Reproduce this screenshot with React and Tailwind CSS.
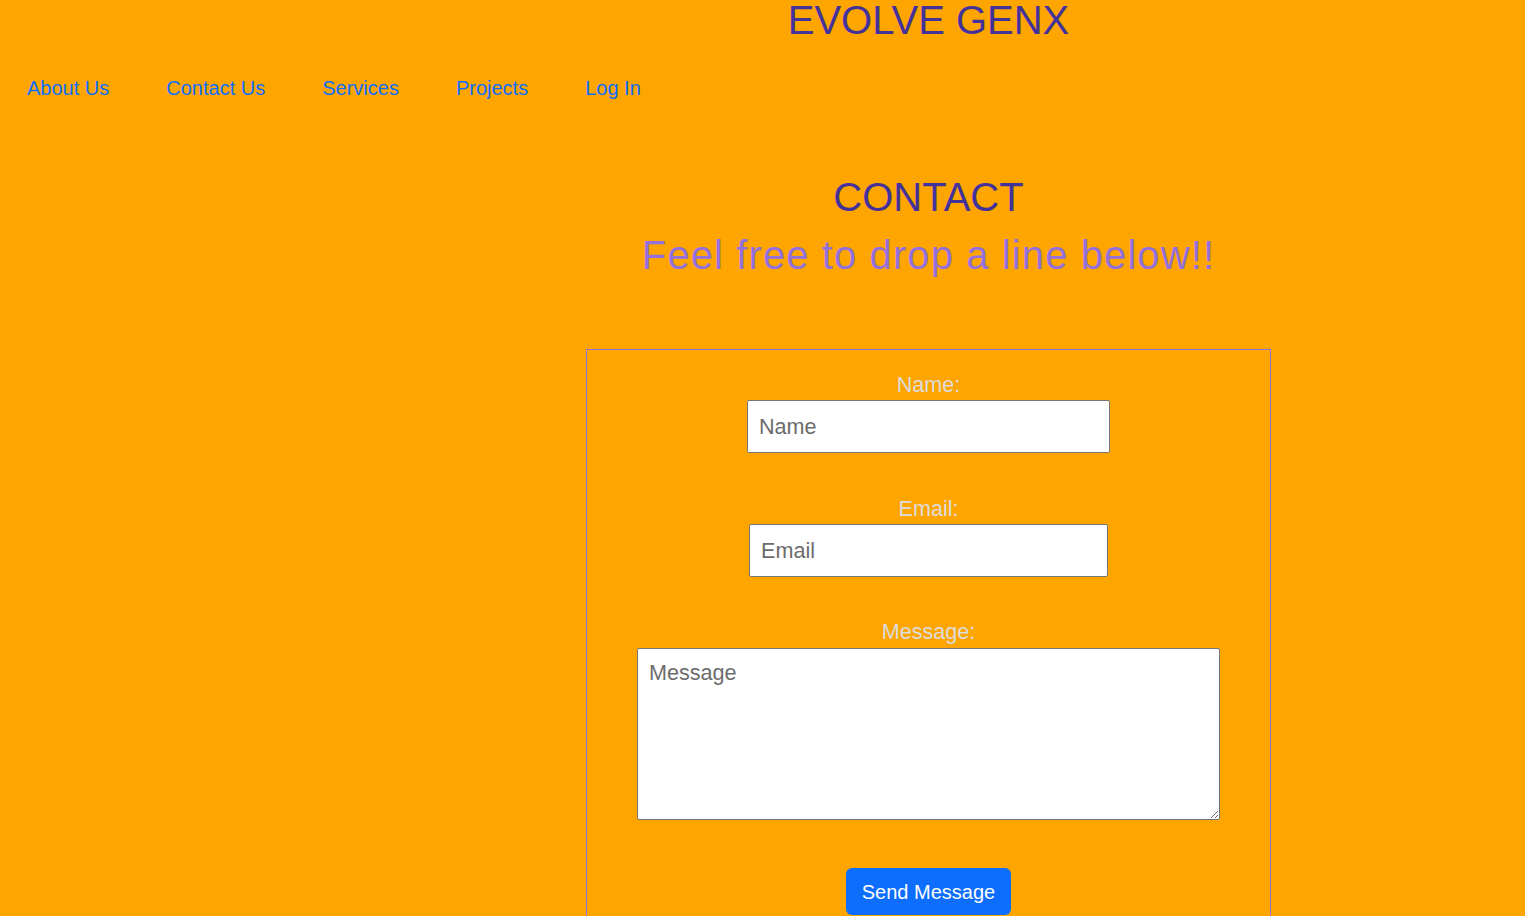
export default function App() {
  const font = { fontFamily: '"Liberation Sans", Arial, sans-serif' };
  return (
    <div className="min-h-[916px] bg-[#ffa500]" style={font}>
      <div className="pl-[332px]">
        <h1 className="text-center text-[40px] leading-[40px] text-[#44329b] font-normal">EVOLVE GENX</h1>
      </div>
      <nav className="mt-[37px] flex gap-[57px] pl-[27px] text-[20px] leading-[23px] text-[#0d6efd]">
        <a href="#">About Us</a>
        <a href="#">Contact Us</a>
        <a href="#">Services</a>
        <a href="#">Projects</a>
        <a href="#">Log In</a>
      </nav>
      <div className="pl-[332px]">
        <h2 className="mt-[74px] text-center text-[40px] leading-[46px] text-[#44329b] font-normal">CONTACT</h2>
        <p className="mt-[12px] text-center text-[40px] leading-[46px] tracking-[1.1px] text-[#9370db]">Feel free to drop a line below!!</p>
        <div className="mx-auto mt-[71px] flex w-[685px] flex-col items-center border border-solid border-[rgb(147,112,219)] pt-[22px] pb-[40px]">
          <label className="text-[21.6px] leading-[25px] text-[#dcdcdc]">Name:</label>
          <input placeholder="Name" className="mt-[3px] h-[53px] w-[363px] rounded-[2px] border border-[#767676] bg-white px-[11px] text-[21.6px] text-black placeholder:text-[#6c6c6c] outline-none" />
          <label className="mt-[43px] text-[21.6px] leading-[25px] text-[#dcdcdc]">Email:</label>
          <input placeholder="Email" className="mt-[3px] h-[53px] w-[359px] rounded-[2px] border border-[#767676] bg-white px-[11px] text-[21.6px] text-black placeholder:text-[#6c6c6c] outline-none" />
          <label className="mt-[42px] text-[21.6px] leading-[25px] text-[#dcdcdc]">Message:</label>
          <textarea placeholder="Message" className="mt-[4px] h-[172px] w-[583px] rounded-[2px] border border-[#767676] bg-white px-[11px] py-[11px] text-[21.6px] leading-[26px] text-black placeholder:text-[#6c6c6c] outline-none" />
          <button type="button" className="mt-[48px] h-[47px] w-[165px] rounded-[6px] bg-[#0d6efd] text-[20px] text-white">Send Message</button>
        </div>
      </div>
    </div>
  );
}
